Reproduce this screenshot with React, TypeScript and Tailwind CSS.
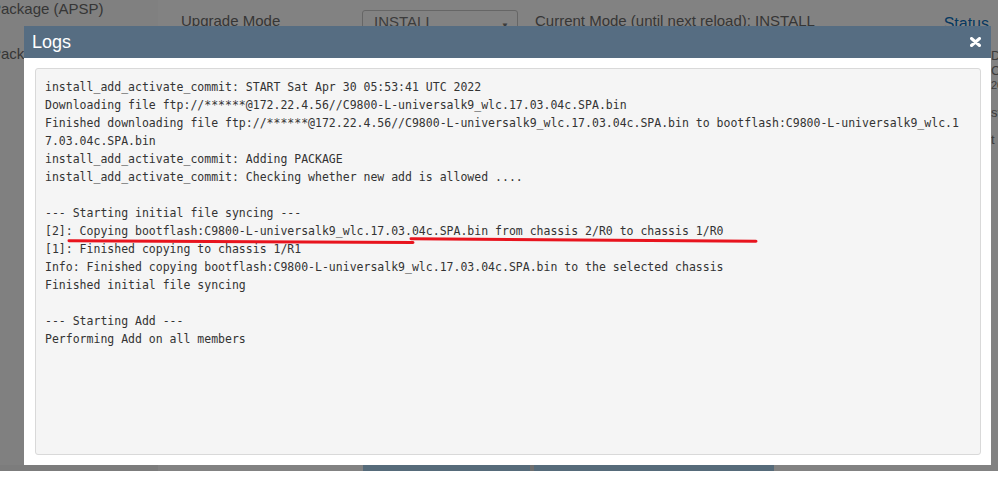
const logLines = [
  'install_add_activate_commit: START Sat Apr 30 05:53:41 UTC 2022',
  'Downloading file ftp://******@172.22.4.56//C9800-L-universalk9_wlc.17.03.04c.SPA.bin',
  'Finished downloading file ftp://******@172.22.4.56//C9800-L-universalk9_wlc.17.03.04c.SPA.bin to bootflash:C9800-L-universalk9_wlc.1',
  '7.03.04c.SPA.bin',
  'install_add_activate_commit: Adding PACKAGE',
  'install_add_activate_commit: Checking whether new add is allowed ....',
  '',
  '--- Starting initial file syncing ---',
  '[2]: Copying bootflash:C9800-L-universalk9_wlc.17.03.04c.SPA.bin from chassis 2/R0 to chassis 1/R0',
  '[1]: Finished copying to chassis 1/R1',
  'Info: Finished copying bootflash:C9800-L-universalk9_wlc.17.03.04c.SPA.bin to the selected chassis',
  'Finished initial file syncing',
  '',
  '--- Starting Add ---',
  'Performing Add on all members',
];

function BackgroundPage() {
  return (
    <div className="flex h-full flex-col font-['Liberation_Sans',Arial,sans-serif] text-[15px] text-[#6b6b6b]">
      <div className="flex flex-1 overflow-hidden">
        {/* sidebar */}
        <div className="w-[158px] shrink-0 overflow-hidden bg-[#fbfbfb]">
          <div className="-ml-[9px] whitespace-nowrap leading-[18px]">Package (APSP)</div>
          <div className="-ml-[9px] mt-[27px] whitespace-nowrap leading-[18px]">Package</div>
        </div>
        {/* main */}
        <div className="flex flex-1 items-start bg-white pt-[10px]">
          <div className="ml-[23px] w-[181px] pt-[2px] leading-[18px]">Upgrade Mode</div>
          <div className="flex h-[28px] w-[156px] items-start justify-between rounded-[3px] border border-[#c8c8c8] pl-[11px] pr-[8px] pt-[2px] leading-[18px] text-[#777]">
            <span>INSTALL</span>
            <span className="pt-[4px] text-[8px]">▼</span>
          </div>
          <div className="ml-[17px] whitespace-nowrap pt-[2px] leading-[18px]">Current Mode (until next reload): INSTALL</div>
          <div className="flex-1" />
          <div className="mr-[2px] pt-[5px] text-[16px] leading-[18px] text-[#0a70c0]">Status</div>
          <div className="mt-[38px] w-[7px] overflow-hidden whitespace-nowrap text-[13px] leading-[15px] text-[#777]">
            <div>D</div>
            <div>C</div>
            <div className="text-[11px]">20</div>
            <div className="mt-[12px]">st</div>
            <div className="mt-[12px]">t</div>
          </div>
        </div>
      </div>
      {/* buttons along the bottom edge */}
      <div className="flex h-[6px] shrink-0">
        <div className="w-[158px] bg-[#f4f4f4]" />
        <div className="w-[205px] bg-white" />
        <div className="w-[167px] bg-[#a9d2ef]" />
        <div className="w-[4px] bg-[#d8d8d8]" />
        <div className="w-[240px] bg-[#a9d2ef]" />
        <div className="flex-1 bg-white" />
      </div>
    </div>
  );
}

function LogsModal() {
  return (
    <div className="absolute left-[24px] top-[26px] flex h-[439px] w-[967px] flex-col bg-white">
      <div className="flex h-[32px] shrink-0 items-center justify-between bg-[#566d82] pl-[8px] pr-[10px]">
        <span className="font-['Liberation_Sans',Arial,sans-serif] text-[18px] text-white">Logs</span>
        <svg width="11" height="10" viewBox="0 0 11 10">
          <path d="M1.5 1.5 L9.5 8.5 M9.5 1.5 L1.5 8.5" stroke="white" strokeWidth="3" strokeLinecap="round" />
        </svg>
      </div>
      <div className="flex-1 pb-[10px] pl-[11px] pr-[10px] pt-[10px]">
        <div className="relative h-full rounded-[3px] border border-[#d9d9d9] bg-[#f5f5f5] pl-[9px] pt-[9px]">
          <div className="font-['DejaVu_Sans_Mono',monospace] text-[11.5px] leading-[18px] text-[#333]">
            {logLines.map((line, i) => (
              <div key={i} className="h-[18px] whitespace-pre">
                {line}
              </div>
            ))}
          </div>
          <svg className="pointer-events-none absolute left-0 top-0" width="946" height="388">
            <path d="M33 171.7 L377 173.5" stroke="#e8141e" strokeWidth="3" fill="none" strokeLinecap="round" />
            <path d="M375 169.8 L720 172.2" stroke="#e8141e" strokeWidth="3" fill="none" strokeLinecap="round" />
          </svg>
        </div>
      </div>
    </div>
  );
}

export default function App() {
  return (
    <div className="h-[486px] w-[998px] overflow-hidden bg-white">
      <div className="relative h-[471px]">
        <BackgroundPage />
        <div className="absolute inset-0 bg-black/[0.49]" />
        <LogsModal />
      </div>
    </div>
  );
}
